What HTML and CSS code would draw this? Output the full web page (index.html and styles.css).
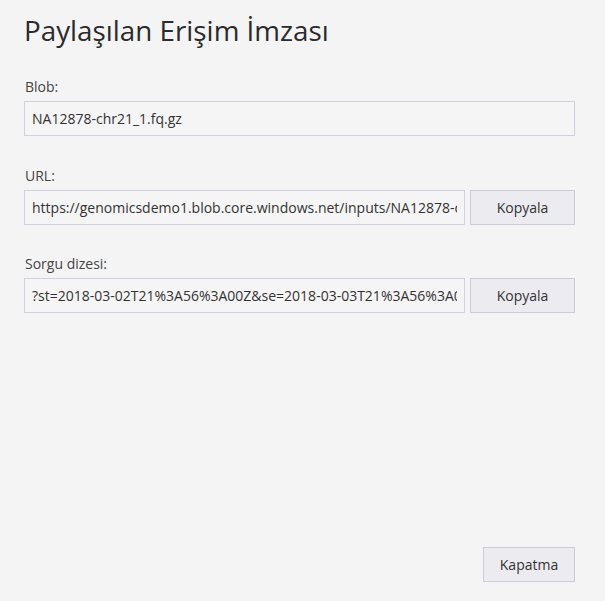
FILE: index.html
```html
<!DOCTYPE html>
<html lang="tr">
<head>
<meta charset="utf-8">
<link rel="stylesheet" href="styles.css">
</head>
<body>
<div class="dialog">
  <h1 class="title">Paylaşılan Erişim İmzası</h1>
  <div class="field">
    <label class="label">Blob:</label>
    <div class="row">
      <input class="input" type="text" value="NA12878-chr21_1.fq.gz" readonly>
    </div>
  </div>
  <div class="field">
    <label class="label">URL:</label>
    <div class="row">
      <input class="input" type="text" value="https://genomicsdemo1.blob.core.windows.net/inputs/NA12878-chr21_1.fq.gz" readonly>
      <button class="btn copy">Kopyala</button>
    </div>
  </div>
  <div class="field">
    <label class="label">Sorgu dizesi:</label>
    <div class="row">
      <input class="input" type="text" value="?st=2018-03-02T21%3A56%3A00Z&amp;se=2018-03-03T21%3A56%3A00Z&amp;sp=r" readonly>
      <button class="btn copy">Kopyala</button>
    </div>
  </div>
  <div class="footer">
    <button class="btn close">Kapatma</button>
  </div>
</div>
</body>
</html>
```
FILE: styles.css
```css
html, body {
  margin: 0;
  padding: 0;
  height: 100%;
  background: #f4f4f4;
}
body {
  font-family: "Open Sans", "Noto Sans", sans-serif;
  color: #333;
}
.dialog {
  box-sizing: border-box;
  height: 601px;
  padding: 11px 30px 19px 24px;
  display: flex;
  flex-direction: column;
}
.title {
  margin: 0;
  font-weight: 400;
  font-size: 27.8px;
  line-height: 38px;
  color: #2b2b2b;
}
.field {
  margin-top: 29px;
  display: flex;
  flex-direction: column;
}
.field + .field {
  margin-top: 31px;
}
.field + .field + .field {
  margin-top: 30px;
}
.label {
  font-size: 14px;
  line-height: 18px;
  color: #444;
  margin-left: 1px;
  margin-bottom: 5px;
}
.row {
  display: flex;
  gap: 5px;
}
.input {
  flex: 1;
  min-width: 0;
  height: 35px;
  box-sizing: border-box;
  border: 1px solid #d0d0e2;
  background: #f5f5f5;
  padding: 0 7px;
  font-family: inherit;
  font-size: 14px;
  color: #333;
  outline: none;
}
.btn {
  height: 35px;
  box-sizing: border-box;
  border: 1px solid #cbcbdc;
  background: #ebebf0;
  font-family: inherit;
  font-size: 14px;
  color: #333;
  padding: 0;
}
.copy {
  width: 105px;
}
.footer {
  margin-top: auto;
  display: flex;
  justify-content: flex-end;
}
.close {
  width: 92px;
}
```
